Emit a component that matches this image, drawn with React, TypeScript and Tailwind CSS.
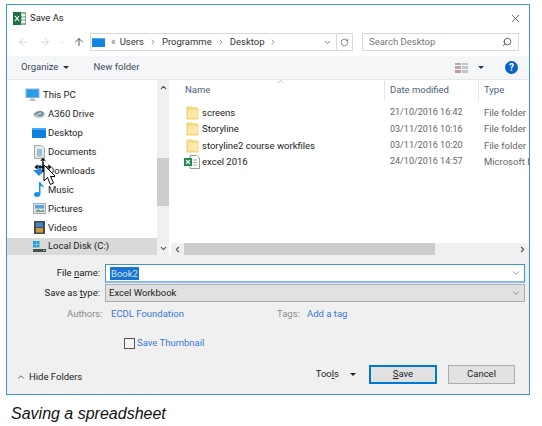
import { ArrowLeft, ArrowRight, ArrowUp, ChevronDown, ChevronLeft, ChevronRight, ChevronUp, RotateCw, Search, X } from "lucide-react";

const ui = { fontFamily: 'Roboto, sans-serif' };

function Folder() {
  return (
    <svg width="13" height="14" viewBox="0 0 13 14" className="shrink-0">
      <path d="M1 1h5l1 1h5v11H1z" fill="#f8dc80" stroke="#ecd27a" strokeWidth="1" />
      <rect x="2" y="4" width="10" height="8" fill="#fbe7a6" />
    </svg>
  );
}

function ExcelFile() {
  return (
    <svg width="16" height="14" viewBox="0 0 16 14" className="shrink-0">
      <path d="M6 .5h7l2.5 2.5v10.5H6z" fill="#fff" stroke="#9a9a9a" />
      <path d="M9 5h4M9 7.500h4M9 10h4" stroke="#8fbf9f" />
      <rect x="0" y="3" width="8" height="8" fill="#1f8a4c" />
      <path d="M2 5l4 4M6 5l-4 4" stroke="#fff" strokeWidth="1.100" />
    </svg>
  );
}

function NavIcon({ name }: { name: string }) {
  if (name === "pc")
    return (
      <svg width="15" height="14" viewBox="0 0 15 14">
        <rect x="1" y="1" width="13" height="8.500" fill="#2b9be8" stroke="#8bb8d8" />
        <path d="M6 10h3v2H6zM4 12.500h7" fill="#b8c4cc" stroke="#b8c4cc" />
      </svg>
    );
  if (name === "a360")
    return (
      <svg width="14" height="12" viewBox="0 0 14 12">
        <ellipse cx="7" cy="6.500" rx="6" ry="3.500" fill="#b9c6cb" />
        <path d="M3 7c2-4 7-4 8-2-1 3-4 3-5 2" fill="none" stroke="#5f7f8c" strokeWidth="1.300" />
      </svg>
    );
  if (name === "desktop")
    return (
      <svg width="14" height="12" viewBox="0 0 14 12">
        <rect x="0" y="1" width="14" height="10" fill="#0f80e0" />
        <rect x="0" y="1" width="14" height="2" fill="#49a7ef" />
      </svg>
    );
  if (name === "docs")
    return (
      <svg width="11" height="14" viewBox="0 0 11 14">
        <path d="M.5.500h7l3 3v10H.5z" fill="#e6e9ea" stroke="#a3a9ac" />
        <path d="M3 5h5M3 7h5M3 9h5" stroke="#4d9dd0" />
        <path d="M3 11h5" stroke="#9aa3a8" />
      </svg>
    );
  if (name === "downloads")
    return (
      <svg width="14" height="14" viewBox="0 0 14 14">
        <path d="M4.500 1h5v5H13l-6 6-6-6h3.500z" fill="#2f86dc" />
      </svg>
    );
  if (name === "music")
    return (
      <svg width="11" height="15" viewBox="0 0 11 15">
        <path d="M5 0h1.500c.3 2.500 3.500 3 3.500 6-1-1.500-2.500-2-3.500-2v8c0 1.700-1.500 3-3.500 3S0 14 0 12.500 1.500 10 3 10c.8 0 1.500.2 2 .5z" fill="#1a8fe8" />
      </svg>
    );
  if (name === "pictures")
    return (
      <svg width="13" height="11" viewBox="0 0 13 11">
        <rect x=".5" y=".5" width="12" height="10" fill="#dfe4e6" stroke="#a5adb1" />
        <rect x="2" y="2" width="9" height="3.500" fill="#5aa6dc" />
        <path d="M2 9l3-3 3 2 3-1.500V9z" fill="#7f9a80" />
      </svg>
    );
  if (name === "videos")
    return (
      <svg width="11" height="13" viewBox="0 0 11 13">
        <rect width="11" height="13" fill="#4a4a4a" />
        <rect x="2" y="1.500" width="7" height="4.500" fill="#3f86c8" />
        <rect x="2" y="7" width="7" height="4.500" fill="#c89a3a" />
      </svg>
    );
  return (
    <svg width="13" height="12" viewBox="0 0 13 12">
      <rect x="0" y="0" width="3" height="3" fill="#1ba1e2" />
      <rect x="3.500" y="0" width="3" height="3" fill="#1ba1e2" />
      <rect x="0" y="3.500" width="3" height="3" fill="#1ba1e2" />
      <rect x="3.500" y="3.500" width="3" height="3" fill="#1ba1e2" />
      <rect x="0" y="8" width="13" height="3" fill="#4b4f52" />
      <rect x="10" y="9" width="2" height="1" fill="#5fd05f" />
    </svg>
  );
}

const navItems = [
  { id: "a360", label: "A360 Drive" },
  { id: "desktop", label: "Desktop" },
  { id: "docs", label: "Documents" },
  { id: "downloads", label: "Downloads" },
  { id: "music", label: "Music" },
  { id: "pictures", label: "Pictures" },
  { id: "videos", label: "Videos" },
];

const files = [
  { name: "screens", date: "21/10/2016 16:42", type: "File folder" },
  { name: "Storyline", date: "03/11/2016 10:16", type: "File folder" },
  { name: "storyline2 course workfiles", date: "03/11/2016 10:20", type: "File folder" },
  { name: "excel 2016", date: "24/10/2016 14:57", type: "Microsoft Excel", excel: true },
];

function Cursor() {
  return (
    <svg width="24" height="36" viewBox="0 0 24 36" className="absolute left-[31px] top-[155px]">
      <path d="M12 6v11M7 12h11" stroke="#000" strokeWidth="1.500" />
      <path d="M12 2l-3 4h6zM3 12l4-3v6zM21 12l-4-3v6z" fill="#000" stroke="#fff" strokeWidth=".5" />
      <path d="M13 10v16l3.500-3.500 3 7 3-1.500-3-6.500h5z" fill="#fff" stroke="#000" />
    </svg>
  );
}

export default function App() {
  return (
    <div className="relative w-[542px] h-[426px] bg-white overflow-hidden text-[9.500px] text-[#1c1c1c]" style={ui}>
      <div className="ml-[6px] mt-[4px] w-[524px] h-[391px] border border-[#3c94dd] bg-white flex flex-col overflow-hidden">
        {/* title bar */}
        <div className="h-[27px] shrink-0 flex items-center pl-[6px] pr-[7px] text-[#222]">
          <svg width="13" height="13" viewBox="0 0 13 13" className="shrink-0">
            <rect x="5" y="1" width="8" height="11" fill="#fff" stroke="#1e7145" />
            <path d="M8 3v7M5 5h8M5 8h8" stroke="#1e7145" strokeWidth=".7" />
            <rect x="0" y="0" width="8" height="13" fill="#1e7145" />
            <path d="M2 4l4 5M6 4L2 9" stroke="#fff" strokeWidth="1.200" />
          </svg>
          <span className="ml-[4px]">Save As</span>
          <X className="ml-auto" size={13} strokeWidth={1.2} />
        </div>

        {/* address row */}
        <div className="h-[18px] mt-[1px] shrink-0 flex items-center">
          <ArrowLeft className="ml-[10px] text-[#c8c8c8]" size={12} strokeWidth={1.5} />
          <ArrowRight className="ml-[10px] text-[#c8c8c8]" size={12} strokeWidth={1.5} />
          <ChevronDown className="ml-[7px] text-[#d0d0d0]" size={7} strokeWidth={2} />
          <ArrowUp className="ml-[8px] text-[#555]" size={12} strokeWidth={2} />
          <div className="ml-[5px] w-[263px] h-full border border-[#d9d9d9] flex items-center text-[#333]">
            <div className="ml-[1px] w-[13px] h-[9px] bg-[#1483e0] border-t border-[#59b0f0]" />
            <span className="ml-[6px] text-[10px] leading-none text-[#777]">«</span>
            <span className="ml-[4px]">Users</span>
            <ChevronRight className="mx-[5px] text-[#666]" size={8} />
            <span>Programme</span>
            <ChevronRight className="mx-[5px] text-[#666]" size={8} />
            <span>Desktop</span>
            <ChevronRight className="ml-[5px] text-[#666]" size={8} />
            <ChevronDown className="ml-auto mr-[4px] text-[#555]" size={9} strokeWidth={2} />
            <div className="h-full w-[16px] border-l border-[#d9d9d9] flex items-center justify-center">
              <RotateCw size={9} strokeWidth={1.8} className="text-[#555]" />
            </div>
          </div>
          <div className="ml-[9px] w-[157px] h-full border border-[#d9d9d9] flex items-center pl-[6px] pr-[6px] text-[#777]">
            <span>Search Desktop</span>
            <Search className="ml-auto -scale-x-100 text-[#444]" size={10} strokeWidth={2} />
          </div>
        </div>

        {/* toolbar */}
        <div className="h-[24px] mt-[5px] shrink-0 bg-[#f5f6f7] flex items-center pl-[14px] pr-[11px] text-[#3a4a5c] border-b border-[#e6e6e6]">
          <span>Organize</span>
          <span className="ml-[5px] w-0 h-0 border-x-[3px] border-x-transparent border-t-[3px] border-t-[#333]" />
          <span className="ml-[24px]">New folder</span>
          <div className="ml-auto w-[13px] h-[10px] grid grid-cols-2 gap-x-[1px] gap-y-[1px]">
            <div className="bg-[#b8a8a8]" />
            <div className="bg-[#c4c4c4]" />
            <div className="bg-[#b8a8a8]" />
            <div className="bg-[#c4c4c4]" />
            <div className="bg-[#c89898]" />
            <div className="bg-[#c4c4c4]" />
          </div>
          <span className="ml-[10px] w-0 h-0 border-x-[3px] border-x-transparent border-t-[3px] border-t-[#1f3a60]" />
          <div className="ml-[21px] w-[13px] h-[13px] rounded-full bg-[#0a62c0] text-white font-bold text-[10px] leading-[13px] text-center">?</div>
        </div>

        {/* main */}
        <div className="flex-1 min-h-0 flex">
          {/* sidebar */}
          <div className="w-[150px] shrink-0 pt-[6px] flex flex-col">
            <div className="h-[18.900px] flex items-center pl-[18px] gap-[2px]">
              <NavIcon name="pc" />
              <span className="ml-[1px]">This PC</span>
            </div>
            {navItems.map((item) => (
              <div key={item.id} className="h-[18.900px] flex items-center pl-[25px]">
                <div className="w-[16px] flex justify-center shrink-0 -ml-[1px]">
                  <NavIcon name={item.id} />
                </div>
                <span className="ml-[1px]">{item.label}</span>
              </div>
            ))}
            <div className="mt-auto h-[17px] bg-[#d9d9d9] flex items-center pl-[25px]">
              <div className="w-[16px] shrink-0 -ml-[1px] flex justify-center">
                <NavIcon name="disk" />
              </div>
              <span className="ml-[1px]">Local Disk (C:)</span>
            </div>
          </div>
          {/* sidebar scrollbar */}
          <div className="w-[12px] shrink-0 bg-[#f0f0f0] flex flex-col items-center text-[#555]">
            <ChevronUp className="mt-[3px]" size={9} strokeWidth={3} />
            <div className="mt-[66px] w-full h-[48px] bg-[#cdcdcd]" />
            <ChevronDown className="mt-auto mb-[2px]" size={9} strokeWidth={3} />
          </div>
          {/* file list */}
          <div className="flex-1 min-w-0 ml-[2px] flex flex-col overflow-hidden">
            <div className="h-[21px] shrink-0 flex items-center text-[#4c607a]">
              <div className="w-[213px] pl-[14px] relative shrink-0">
                Name
                <ChevronUp className="absolute left-[105px] -top-[6px] text-[#999]" size={9} strokeWidth={1.5} />
              </div>
              <div className="w-[94px] h-full flex items-center pl-[5px] border-l border-[#e5e5e5] shrink-0">Date modified</div>
              <div className="h-full flex items-center pl-[5px] border-l border-[#e5e5e5]">Type</div>
            </div>
            <div className="pt-[4px] flex-1 min-h-0">
              {files.map((f) => (
                <div key={f.name} className="h-[16.300px] flex items-center whitespace-nowrap">
                  <div className="w-[213px] shrink-0 flex items-center pl-[15px]">
                    {f.excel ? <div className="-ml-[2px]"><ExcelFile /></div> : <Folder />}
                    <span className={f.excel ? "ml-[2px]" : "ml-[3px]"}>{f.name}</span>
                  </div>
                  <div className="w-[94px] shrink-0 pl-[6px] text-[9px] text-[#666]">{f.date}</div>
                  <div className="pl-[6px] text-[#666]">{f.type}</div>
                </div>
              ))}
            </div>
            {/* horizontal scrollbar */}
            <div className="h-[12px] shrink-0 bg-[#f0f0f0] flex items-center text-[#555]">
              <ChevronLeft className="ml-[2px]" size={9} strokeWidth={3} />
              <div className="ml-[2px] w-[251px] h-full bg-[#cdcdcd]" />
              <ChevronRight className="ml-auto mr-[2px]" size={9} strokeWidth={3} />
            </div>
          </div>
        </div>

        {/* bottom panel */}
        <div className="h-[139px] shrink-0 bg-[#f0f0f0] flex flex-col pt-[9px] pl-[4px] pr-[4px]">
          <div className="flex items-center h-[19px]">
            <span className="w-[89px] text-right shrink-0"><span>File </span><span className="underline">n</span><span>ame:</span></span>
            <div className="ml-[5px] flex-1 h-full bg-white border border-[#3c94dd] border-b-[2px] border-b-[#86bdec] flex items-center pl-[4px] pr-[3px]">
              <span className="bg-[#1a74d0] text-[#cfe2f5] leading-[13px] px-[1px]">Book2</span>
              <ChevronDown className="ml-auto text-[#555]" size={10} strokeWidth={1.5} />
            </div>
          </div>
          <div className="flex items-center h-[18px] mt-[1px]">
            <span className="w-[89px] text-right shrink-0">Save as <span className="underline">t</span>ype:</span>
            <div className="ml-[5px] flex-1 h-full bg-[#e1e1e1] border border-[#adadad] flex items-center pl-[3px] pr-[3px]">
              <span>Excel Workbook</span>
              <ChevronDown className="ml-auto text-[#555]" size={10} strokeWidth={1.5} />
            </div>
          </div>
          <div className="flex items-center h-[16px] mt-[4px] pl-[56px]">
            <span className="text-[#8a8a8a] w-[43px]">Authors:</span>
            <span className="text-[#3a78d4] ml-[1px] w-[165px]">ECDL Foundation</span>
            <span className="text-[#8a8a8a] ml-[1px] w-[24px]">Tags:</span>
            <span className="text-[#3a78d4] ml-[6px]">Add a tag</span>
          </div>
          <div className="flex items-center h-[14px] mt-[14px] pl-[113px]">
            <span className="w-[11px] h-[11px] border border-[#555] bg-[#f5f5f5] shrink-0" />
            <span className="ml-[2px] text-[#3a78d4]">Save Thumbnail</span>
          </div>
          <div className="flex items-center h-[20px] mt-[14px]">
            <ChevronUp className="ml-[5px] mt-[6px] text-[#444]" size={10} strokeWidth={2} />
            <span className="ml-[3px] mt-[6px]">Hide Folders</span>
            <span className="ml-auto">Too<span className="underline">l</span>s</span>
            <span className="ml-[11px] w-0 h-0 border-x-[3px] border-x-transparent border-t-[3px] border-t-[#222]" />
            <div className="ml-[13px] w-[68px] h-[19px] bg-[#e1e1e1] border-2 border-[#0078d7] flex items-center justify-center">
              <span><span className="underline">S</span>ave</span>
            </div>
            <div className="ml-[11px] mr-[10px] w-[67px] h-[19px] bg-[#e1e1e1] border border-[#adadad] flex items-center justify-center">Cancel</div>
          </div>
        </div>
      </div>
      <Cursor />
      <p className="ml-[11px] mt-[7px] text-[16px] italic text-[#111]" style={{ fontFamily: '"Liberation Sans", sans-serif' }}>
        Saving a spreadsheet
      </p>
    </div>
  );
}
